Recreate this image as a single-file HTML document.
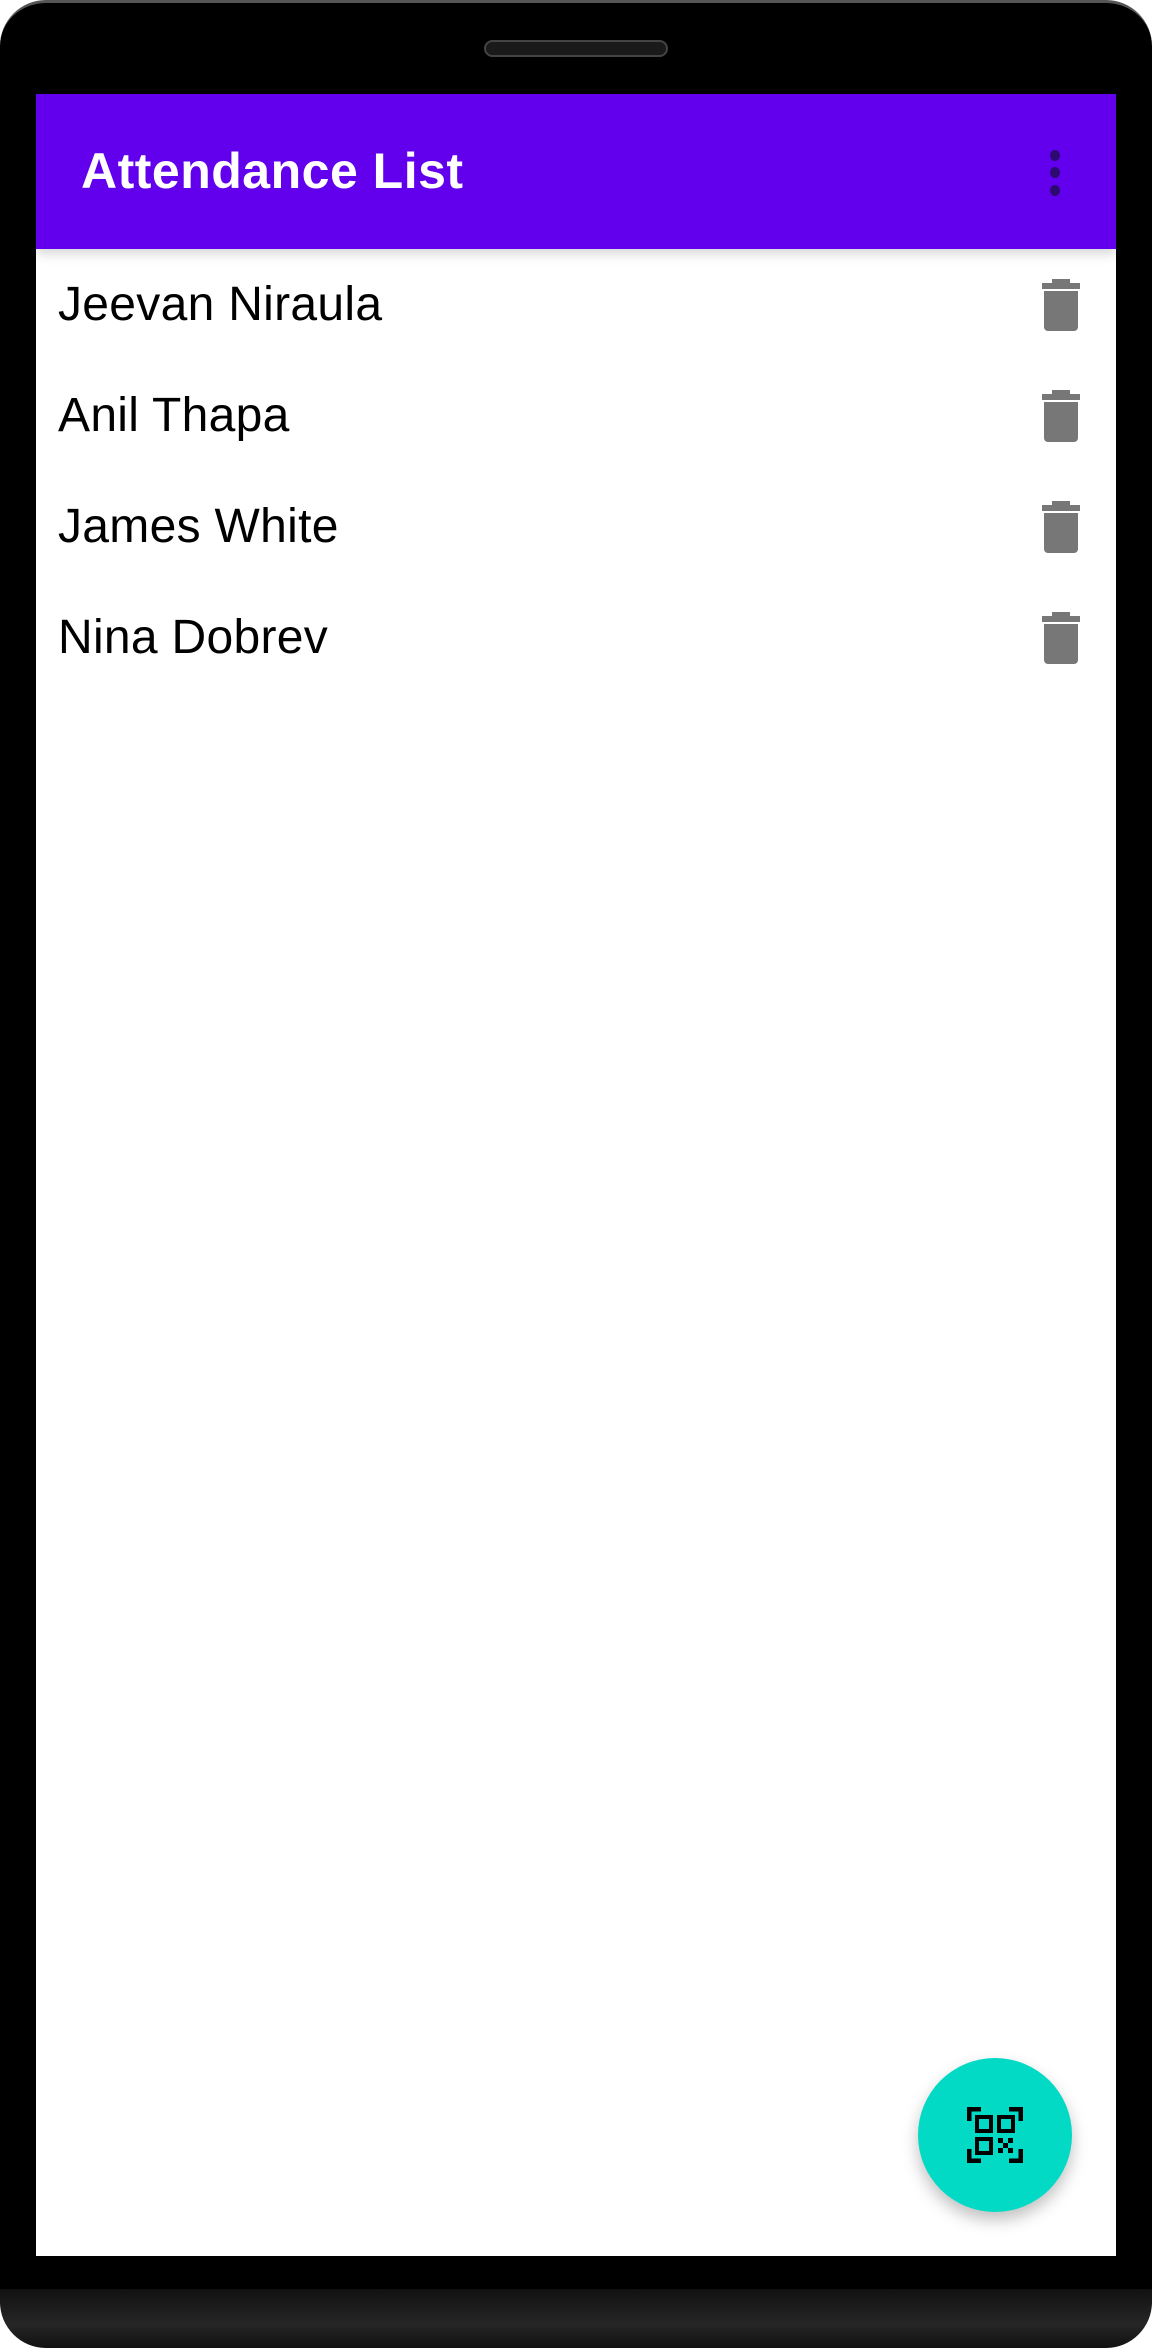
<!DOCTYPE html>
<html><head><style>
html,body{margin:0;padding:0;width:1152px;height:2345px;overflow:hidden;background:#fff;}
.phone{position:absolute;left:0;top:0;width:1152px;height:2345px;background:#000;border-radius:46px;border-top:3px solid #555;box-sizing:border-box;}
.spk{position:absolute;left:484px;top:37px;width:184px;height:17px;border-radius:9px;background:#1a1a1a;border:2px solid #444;box-sizing:border-box;}
.screen{position:absolute;left:36px;top:91px;width:1080px;height:2162px;background:#fff;overflow:hidden;}
.bar{position:absolute;left:0;top:0;width:1080px;height:155px;background:#6200ee;box-shadow:0 4px 12px rgba(0,0,0,.18);}
.title{position:absolute;left:45px;top:48px;font:bold 50px "Liberation Sans",sans-serif;color:#fff;letter-spacing:0.5px;}
.dot{position:absolute;left:1014px;width:10px;height:11px;border-radius:50%;background:#2d0a70;}
.row{position:absolute;left:22px;font:48px "Liberation Sans",sans-serif;color:#000;letter-spacing:0.3px;}
.trash{position:absolute;left:1006px;}
.fab{position:absolute;left:882px;top:1964px;width:154px;height:154px;border-radius:50%;background:#03dac6;box-shadow:0 8px 16px rgba(0,0,0,.25);}
.bottom{position:absolute;left:0;top:2286px;width:1152px;height:59px;background:linear-gradient(#111,#262626 60%,#111);border-radius:0 0 46px 46px;}
</style></head><body>
<div class="phone">
<div class="spk"></div>
<div class="screen">
<div class="bar"><div class="title">Attendance List</div>
<div class="dot" style="top:56px"></div><div class="dot" style="top:73px"></div><div class="dot" style="top:91px"></div></div>
<div class="row" style="top:183px">Jeevan Niraula</div>
<div class="row" style="top:294px">Anil Thapa</div>
<div class="row" style="top:405px">James White</div>
<div class="row" style="top:516px">Nina Dobrev</div>
<svg class="trash" style="top:185px" width="38" height="52" viewBox="0 0 38 52"><path d="M10 0h18v4h10v6H0V4h10z" fill="#777"/><path d="M2 12h34v36a4 4 0 0 1-4 4H6a4 4 0 0 1-4-4z" fill="#777"/></svg>
<svg class="trash" style="top:296px" width="38" height="52" viewBox="0 0 38 52"><path d="M10 0h18v4h10v6H0V4h10z" fill="#777"/><path d="M2 12h34v36a4 4 0 0 1-4 4H6a4 4 0 0 1-4-4z" fill="#777"/></svg>
<svg class="trash" style="top:407px" width="38" height="52" viewBox="0 0 38 52"><path d="M10 0h18v4h10v6H0V4h10z" fill="#777"/><path d="M2 12h34v36a4 4 0 0 1-4 4H6a4 4 0 0 1-4-4z" fill="#777"/></svg>
<svg class="trash" style="top:518px" width="38" height="52" viewBox="0 0 38 52"><path d="M10 0h18v4h10v6H0V4h10z" fill="#777"/><path d="M2 12h34v36a4 4 0 0 1-4 4H6a4 4 0 0 1-4-4z" fill="#777"/></svg>
<div class="fab"><svg style="position:absolute;left:49px;top:49px" width="56" height="56" viewBox="0 0 56 56" fill="none" stroke="#000">
<path d="M2 14V2h12M42 2h12v12M2 42v12h12M54 42v12H42" stroke-width="5"/>
<rect x="10" y="10" width="14" height="14" stroke-width="4"/><rect x="32" y="10" width="14" height="14" stroke-width="4"/><rect x="10" y="32" width="14" height="14" stroke-width="4"/>
<path d="M31 31h5v5h-5zM41 31h5v5h-5zM36 36h5v5h-5zM31 41h5v5h-5zM41 41h5v5h-5z" fill="#000" stroke="none"/></svg></div>
</div>
<div class="bottom"></div>
</div>
</body></html>
